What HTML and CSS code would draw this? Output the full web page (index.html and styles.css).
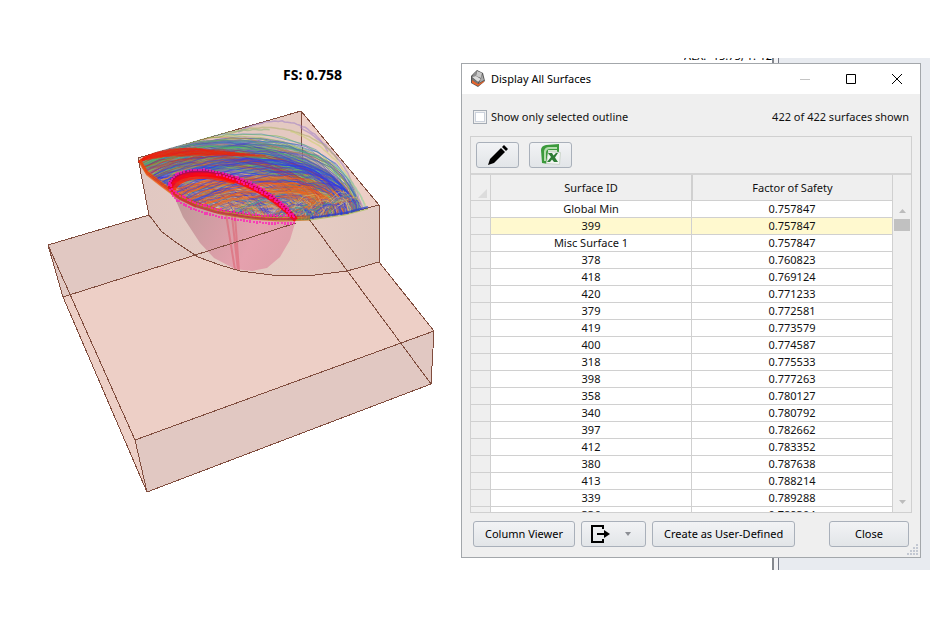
FILE: index.html
```
<!doctype html>
<html lang="en">
<head>
	<meta charset="utf-8">
	<title>Display All Surfaces</title>
	<link rel="stylesheet" href="styles.css">
</head>
<body>
<main class="workspace">
	<div class="view">
		<svg class="model" viewBox="0 58 440 512" role="img" aria-label="Slope model">
			<defs>
				<linearGradient id="bowlFill" x1="0" y1="0" x2="1" y2="0.3">
					<stop offset="0" stop-color="#bd9a98"/>
					<stop offset="0.4" stop-color="#d39da4"/>
					<stop offset="0.75" stop-color="#e5a1ae"/>
					<stop offset="1" stop-color="#df9fa9"/>
				</linearGradient>
				<linearGradient id="faceFill" x1="0" y1="0" x2="1" y2="0">
					<stop offset="0" stop-color="#e1c8c2"/>
					<stop offset="0.7" stop-color="#e6ccc3"/>
					<stop offset="1" stop-color="#e1c8c0"/>
				</linearGradient>
				<clipPath id="crest">
					<path d="M137 160L142 156L301 111L379 205L365 210L345 215L310 220L280 222L250 219L220 213L195 205L175 195L160 184L146 174Z"/>
				</clipPath>
			</defs>
			<text class="fs" x="283" y="80">FS: 0.758</text>
			<path fill="#edcfc6" d="M48 245L149 215L379 262L434 331L431 384L147 492L63 297Z"/>
			<path fill="#e1c8c2" d="M48 245L149 215L162 232L177 243L195 254L63 297Z"/>
			<path fill="#e1c8c2" d="M135 440L434 331L431 384L147 492Z"/>
			<path fill="#e4c9c1" d="M138 158L301 111L304 215L250 219Z"/>
			<path fill="#edcfc6" d="M301 111L379 205L304 222Z"/>
			<path fill="url(#faceFill)" d="M138 158L146 173L165 187L195 205L250 219L310 219L345 214L379 205V262L347 271L315 275H272L240 271L220 265L198 257L177 243L162 232L149 215Z"/>
			<path fill="url(#bowlFill)" d="M174 196L183 217L200 243L214 258L235 269L252 271L267 268L280 257L290 240L296 220L250 217Z"/>
			<g class="probe">
				<path d="M226 214L235 270M232 216L238 271M235 216L239 271"/>
			</g>
			<g class="edges">
				<path d="M48 245L149 215L138 158L301 111L379 205V262L434 331L431 384L147 492L63 297Z"/>
				<path d="M48 245L135 440L147 492M135 440L434 331"/>
				<path d="M63 297L296 223M309 219L431 384M301 111L304 215M345 214L379 205"/>
				<path d="M149 215L162 232L177 243L198 257L220 265L240 271L272 275H315L347 271L379 262"/>
			</g>
			<g id="surfaces" clip-path="url(#crest)">
				<path fill="#a8949c" opacity="0.6" d="M139 161C205 121 340 135 352 212L310 220L250 219L195 205L160 184Z"/>
			</g>
			<g id="rim"></g>
			<g id="critical"></g>
		</svg>
		<div class="coords"><span>ALX: -15.75, 1.-12</span></div>
	</div>
	<div class="dock"></div>

	<section class="dialog" role="dialog" aria-labelledby="dialogTitle">
		<header class="titlebar">
			<svg class="app-icon" viewBox="0 0 16 18">
				<path fill="#555" d="M7 0L13 3L15 11L8 17L1 13L1 6Z"/>
				<path fill="#c9c9c9" d="M7 1L12 3L11 8L6 6Z"/>
				<path fill="#8e8e8e" d="M7 1L6 6L2 7L4 3Z"/>
				<path fill="#ddd" d="M2 7L6 6L11 9L8 12Z"/>
				<path fill="#aaa" d="M12 4L14 10L9 13L11 9Z"/>
				<path fill="#777" d="M2 8L8 12V14L2 10Z"/>
				<path fill="#e8642c" d="M2 10L8 14L14 11V12L8 16L2 13Z"/>
			</svg>
			<h1 id="dialogTitle">Display All Surfaces</h1>
			<div class="window-buttons">
				<button type="button" aria-label="Minimize" disabled><svg viewBox="0 0 12 12"><path stroke="#c4c4c4" d="M1 6.5H11"/></svg></button>
				<button type="button" aria-label="Maximize"><svg viewBox="0 0 12 12"><path stroke="#000" d="M1.5 1.5H10.5V10.5H1.5Z"/></svg></button>
				<button type="button" aria-label="Close window"><svg viewBox="0 0 12 12"><path stroke="#000" d="M1 1L11 11M11 1L1 11"/></svg></button>
			</div>
		</header>
		<div class="options">
			<label><input type="checkbox"> Show only selected outline</label>
			<span>422 of 422 surfaces shown</span>
		</div>
		<div class="panel">
			<div class="toolbar">
				<button type="button" class="btn tool" aria-label="Edit">
					<svg viewBox="0 0 22 22" width="22" height="22">
						<path d="M1 21L3 15L14 4L18 8L7 19Z"/>
						<path d="M15 3L17 1L21 5L19 7Z"/>
					</svg>
				</button>
				<button type="button" class="btn tool" aria-label="Export to Excel">
					<svg viewBox="0 0 22 22" width="22" height="22">
						<path fill="#3c9a3c" d="M1 6Q1 2 6 1L19 0V9L8 20L2 19Z"/>
						<path fill="#b5dcae" d="M4 7Q5 3 9 3H17V5H10Q6 5 6 9V17H4Z"/>
						<path fill="#d3ebcd" d="M8 6H17V8H8Z"/>
						<path fill="#f3f6f3" stroke="#cdd6cd" d="M8.500 7.500L20.500 8.500L19.500 20.500L6.500 19.500Z"/>
						<path fill="#2f7d35" d="M8 9H12L13.500 11.500L16 9H18L15 13.500L18 18H14L12 15.500L10 18H7L11 13Z"/>
					</svg>
				</button>
			</div>
			<div class="grid">
				<table>
					<colgroup><col class="mark"><col><col></colgroup>
					<thead>
						<tr><th class="corner"><svg viewBox="0 0 9 9"><path fill="#dcdcdc" d="M9 0V9H0Z"/></svg></th><th>Surface ID</th><th>Factor of Safety</th></tr>
					</thead>
					<tbody>
						<tr><th></th><td>Global Min</td><td>0.757847</td></tr>
						<tr class="selected"><th></th><td>399</td><td>0.757847</td></tr>
						<tr><th></th><td>Misc Surface 1</td><td>0.757847</td></tr>
						<tr><th></th><td>378</td><td>0.760823</td></tr>
						<tr><th></th><td>418</td><td>0.769124</td></tr>
						<tr><th></th><td>420</td><td>0.771233</td></tr>
						<tr><th></th><td>379</td><td>0.772581</td></tr>
						<tr><th></th><td>419</td><td>0.773579</td></tr>
						<tr><th></th><td>400</td><td>0.774587</td></tr>
						<tr><th></th><td>318</td><td>0.775533</td></tr>
						<tr><th></th><td>398</td><td>0.777263</td></tr>
						<tr><th></th><td>358</td><td>0.780127</td></tr>
						<tr><th></th><td>340</td><td>0.780792</td></tr>
						<tr><th></th><td>397</td><td>0.782662</td></tr>
						<tr><th></th><td>412</td><td>0.783352</td></tr>
						<tr><th></th><td>380</td><td>0.787638</td></tr>
						<tr><th></th><td>413</td><td>0.788214</td></tr>
						<tr><th></th><td>339</td><td>0.789288</td></tr>
						<tr><th></th><td>336</td><td>0.789304</td></tr>
					</tbody>
				</table>
				<div class="scrollbar">
					<svg viewBox="0 0 7 4"><path d="M0 4L3.500 0L7 4Z"/></svg>
					<div class="thumb"></div>
					<svg viewBox="0 0 7 4"><path d="M0 0L3.500 4L7 0Z"/></svg>
				</div>
			</div>
		</div>
		<footer class="actions">
			<button type="button" class="btn">Column Viewer</button>
			<button type="button" class="btn export" aria-label="Export">
				<svg viewBox="0 0 20 20" width="20" height="20">
					<path fill="none" stroke="#000" stroke-width="2" d="M13 5V2H2V18H13V15"/>
					<path d="M7 9H14V6L20 10L14 14V11H7Z"/>
				</svg>
				<svg viewBox="0 0 6 4" width="6" height="4"><path fill="#8b8e94" d="M0 0H6L3 4Z"/></svg>
			</button>
			<button type="button" class="btn">Create as User-Defined</button>
			<button type="button" class="btn close">Close</button>
		</footer>
		<svg class="grip" viewBox="0 0 12 12"><path d="M9 0h2v2h-2zM6 3h2v2h-2zM9 3h2v2h-2zM3 6h2v2h-2zM6 6h2v2h-2zM9 6h2v2h-2zM0 9h2v2h-2zM3 9h2v2h-2zM6 9h2v2h-2zM9 9h2v2h-2z"/></svg>
	</section>
</main>
<script src="surfaces.js"></script>
</body>
</html>
```
FILE: styles.css
```
* {
    box-sizing: border-box;
}

body {
    margin: 0;
    background: #fff;
    color: #111;
}

body, button {
    font: 11px/16px "Noto Sans", "Open Sans", sans-serif;
}

.workspace {
    position: relative;
    display: flex;
    margin-top: 58px;
    height: 512px;
}

.view {
    flex: 1;
    display: flex;
    justify-content: space-between;
    overflow: hidden;
}

.model {
    flex: 0 0 440px;
    height: 512px;
}

.fs {
    font: bold 14px "Noto Sans", "Open Sans", sans-serif;
    fill: #000;
}

.edges {
    fill: none;
    stroke: #804d3e;
    shape-rendering: crispEdges;
}

.probe {
    fill: none;
    stroke: #dc5060;
    stroke-width: 2;
    opacity: .45;
}

polyline {
    fill: none;
}

.coords {
    display: flex;
    align-items: flex-end;
    height: 6px;
    overflow: hidden;
    color: #000;
}

.dock {
    flex: 0 0 158px;
    border-left: 2px solid #85888e;
    background: linear-gradient(to right, #f3f3f5 4px, #777b88 4px, #777b88 5px, #e8ebf0 5px);
}

.dialog {
    position: absolute;
    top: 5px;
    right: 9px;
    width: 460px;
    border: 1px solid #a3a7ab;
    background: #efefef;
}

.titlebar {
    display: flex;
    align-items: center;
    height: 30px;
    padding-left: 8px;
    background: #fff;
}

.app-icon {
    width: 16px;
    height: 18px;
    margin-right: 5px;
}

.titlebar h1 {
    flex: 1;
    margin: 0;
    font-size: 11px;
    font-weight: normal;
    color: #000;
}

.window-buttons {
    display: flex;
}

.window-buttons button {
    display: flex;
    align-items: center;
    justify-content: center;
    width: 46px;
    height: 30px;
    padding: 0;
    border: 0;
    background: none;
}

.window-buttons svg {
    width: 12px;
    height: 12px;
    fill: none;
}

.options {
    display: flex;
    align-items: center;
    justify-content: space-between;
    height: 42px;
    padding: 3px 11px 0;
}

.options label {
    display: flex;
    align-items: center;
    gap: 4px;
}

.options input {
    appearance: none;
    width: 14px;
    height: 14px;
    margin: 0;
    border: 1px solid #a5acb5;
    background: #fff;
    box-shadow: inset 0 0 0 1px #f0f0f0, inset 0 0 0 2px #ccd2dc;
}

.panel {
    margin: 0 8px;
    border: 1px solid #d0d0d0;
}

.toolbar {
    display: flex;
    gap: 10px;
    padding: 5px;
    border-bottom: 2px solid #d4d4d4;
}

.btn {
    display: flex;
    align-items: center;
    justify-content: center;
    height: 26px;
    padding: 0 10px;
    border: 1px solid #a9b0ba;
    border-radius: 3px;
    background: linear-gradient(#f2f3f5, #e2e5e8);
    color: #000;
    white-space: nowrap;
}

.tool {
    width: 43px;
    padding: 0;
}

.grid {
    display: flex;
    height: 337px;
    overflow: hidden;
}

table {
    flex: 1;
    width: 100%;
    height: 349px;
    table-layout: fixed;
    border-collapse: separate;
    border-spacing: 0;
}

.mark {
    width: 20px;
}

th, td {
    height: 17px;
    padding: 0;
    border-right: 1px solid #d0d0d0;
    border-bottom: 1px solid #d0d0d0;
    line-height: 16px;
    font-weight: normal;
    text-align: center;
}

thead th {
    height: 26px;
}

thead th + th + th {
    border-left: 1px solid #d0d0d0;
}

th.corner {
    padding: 0 3px 2px 0;
    text-align: right;
    vertical-align: bottom;
}

.corner svg {
    display: block;
    width: 9px;
    height: 9px;
    margin-left: auto;
}

td {
    background: #fff;
}

.selected td {
    background: #fff9cf;
}

.scrollbar {
    flex: none;
    display: flex;
    flex-direction: column;
    align-items: center;
    width: 18px;
    padding: 34px 0 8px;
}

.scrollbar svg {
    width: 7px;
    height: 4px;
    fill: #bcbcbc;
}

.thumb {
    width: 16px;
    height: 12px;
    margin: 6px 0 auto;
    background: #c1c1c1;
}

.actions {
    display: flex;
    gap: 6px;
    padding: 8px 11px 10px;
}

.actions .btn {
    padding: 0 11px;
}

.actions .export {
    justify-content: flex-start;
    gap: 15px;
    width: 65px;
    padding: 0 8px;
}

.close {
    width: 80px;
    margin-left: auto;
}

.grip {
    position: absolute;
    right: 1px;
    bottom: 1px;
    width: 12px;
    height: 12px;
    fill: #c3c8d2;
}
```
FILE: surfaces.js
```
var NS = 'http://www.w3.org/2000/svg';
var seed = 399;

// seeded so the surfaces look the same on every load
function rnd() {
  seed = (seed * 16807) % 2147483647;
  return seed / 2147483647;
}

function draw(group, points, color, width, opacity) {
  var line = document.createElementNS(NS, 'polyline');
  line.setAttribute('points', points.map(function (p) { return p[0].toFixed(1) + ',' + p[1].toFixed(1); }).join(' '));
  line.setAttribute('stroke', color);
  line.setAttribute('stroke-width', width);
  line.setAttribute('opacity', opacity);
  document.getElementById(group).appendChild(line);
}

function bezier(a, b, c, d, jitter) {
  var points = [];
  for (var i = 0; i <= 32; i++) {
    var t = i / 32, u = 1 - t;
    points.push([0, 1].map(function (k) {
      return u * u * u * a[k] + 3 * u * u * t * b[k] + 3 * u * t * t * c[k] + t * t * t * d[k] + (rnd() - 0.5) * jitter;
    }));
  }
  return points;
}

// crest line of the slope, left to right
var crest = [[139, 161], [146, 173], [160, 184], [175, 195], [195, 205], [220, 213], [250, 218], [280, 220], [310, 219], [345, 214], [368, 208]];

function onCrest(t) {
  var f = t * (crest.length - 1);
  var i = Math.min(Math.floor(f), crest.length - 2);
  f -= i;
  return [crest[i][0] + (crest[i + 1][0] - crest[i][0]) * f, crest[i][1] + (crest[i + 1][1] - crest[i][1]) * f];
}

function surface(t1, t2, rise, color, width, opacity) {
  var a = onCrest(t1), d = onCrest(t2);
  var w = d[0] - a[0];
  draw('surfaces', bezier(a, [a[0] + 0.3 * w, a[1] - 0.2 * w * rise], [d[0] - 0.06 * w, d[1] - 0.38 * w * rise], d, 1.8), color, width, opacity);
}

var outer = ['#3a3ae0', '#4a48b8', '#7a70a8', '#3f90b8', '#3aa890', '#68c048', '#98b850', '#c87848', '#8a7a80', '#4848d8', '#7060a0', '#50a870'];
var inner = ['#3838e0', '#5050c8', '#7868b0', '#3888c0', '#48a868', '#a8a858', '#e06828', '#e88030', '#c86040', '#e0a868', '#4040d0', '#c8b890'];

function pick(colors) {
  return colors[Math.floor(rnd() * colors.length)];
}

var i, t1, t2;
for (i = 0; i < 200; i++) {
  t1 = rnd() * 0.26;
  t2 = 0.76 + rnd() * 0.21;
  surface(t1, t2, 0.6 + rnd() * 0.62, pick(outer), 1, 0.55);
}
for (i = 0; i < 170; i++) {
  t1 = 0.15 + rnd() * 0.5;
  t2 = t1 + 0.2 + rnd() * 0.4;
  surface(t1, Math.min(t2, 0.95), 0.4 + rnd() * 0.8, pick(inner), 1, 0.6);
}
for (i = 0; i < 16; i++) {
  surface(rnd() * 0.15, 0.82 + rnd() * 0.12, 0.75 + rnd() * 0.15, pick(['#d84820', '#c02838', '#58d048']), 1, 0.5);
}
for (i = 0; i < 22; i++) {
  surface(0.25 + rnd() * 0.2, 0.82 + rnd() * 0.1, 0.6 + rnd() * 0.25, '#f06018', 1.2, 0.55);
}
for (i = 0; i < 14; i++) {
  surface(0.12 + rnd() * 0.3, 0.88 + rnd() * 0.07, 0.8 + rnd() * 0.2, '#2a38ee', 1.2, 0.5);
}
for (i = 0; i < 70; i++) {
  t1 = 0.66 + rnd() * 0.2;
  surface(t1, t1 + 0.06 + rnd() * 0.08, 1.2 + rnd() * 1.6, pick(inner), 1, 0.65);
}

// loose outer surfaces
draw('surfaces', bezier([238, 132], [275, 112], [312, 120], [328, 152], 1), '#9878c8', 1.5, 0.5);
draw('surfaces', bezier([300, 127], [340, 150], [352, 178], [363, 209], 1), '#9878c8', 1.5, 0.5);
draw('surfaces', bezier([225, 135], [268, 118], [320, 132], [338, 160], 1), '#a8b060', 1.5, 0.5);
draw('surfaces', bezier([290, 131], [335, 148], [350, 178], [367, 208], 1), '#c8d070', 1.5, 0.55);
draw('surfaces', bezier([335, 165], [352, 180], [362, 195], [365, 208], 1), '#88d0b8', 1.5, 0.55);
draw('surfaces', bezier([160, 153], [210, 134], [240, 128], [270, 130], 1), '#90b878', 1.5, 0.6);

// red band along the left end
for (i = 0; i < 14; i++) {
  draw('surfaces', bezier([139, 162], [150, 150 + i / 2], [180, 147 + i / 2], [200 + i * 5, 149 + i / 2], 1), '#f0200c', 1.5, 0.5);
}

for (i = 0; i < 5; i++) {
  draw('rim', crest.slice(0, 5).map(function (p) { return [p[0] + 1, p[1] - 2 + i]; }), i % 2 ? '#f02808' : '#e86010', 1.5, 0.7);
  draw('rim', crest.slice(3, 9).map(function (p) { return [p[0], p[1] - 3 + i]; }), ['#d03020', '#c09020', '#e05010', '#70a020', '#c07010'][i], 1, 0.8);
}
draw('rim', crest.slice(8).map(function (p) { return [p[0], p[1] - 1]; }), '#2038d0', 2, 0.7);
draw('rim', crest.slice(8).map(function (p) { return [p[0], p[1] + 1]; }), '#a0c050', 1, 0.7);

// critical surface outline with its markers
var upper = bezier([169, 186], [174, 160], [248, 166], [295, 217], 0);
var lower = [[169, 186], [172, 192], [180, 199], [195, 206], [215, 212], [240, 216], [265, 219], [296, 219]];
draw('critical', upper.slice(0, 20).map(function (p) { return [p[0] + 4, p[1] + 6]; }), '#ff2000', 4, 0.8);
draw('critical', upper.map(function (p) { return [p[0] + 1, p[1] + 3]; }), '#ff0010', 5, 0.9);
draw('critical', upper, '#b8004c', 3, 0.75);
draw('critical', lower, '#d01048', 2, 0.6);

function markers(points, spread, below) {
  for (var k = 0; k < points.length - 1; k++) {
    var a = points[k], b = points[k + 1];
    var n = Math.max(1, Math.round(Math.hypot(b[0] - a[0], b[1] - a[1]) / 3));
    for (var j = 0; j < n; j++) {
      var x = Math.round(a[0] + (b[0] - a[0]) * j / n);
      var y = Math.round(a[1] + (b[1] - a[1]) * j / n);
      var s = spread + Math.floor(rnd() * 2);
      draw('critical', [[x, y - s], [x, y - spread + 2]], '#ff18b8', 1.5, 0.95);
      if (k >= below) {
        draw('critical', [[x + 1, y + spread - 1], [x + 1, y + s + 1]], '#ff18b8', 1.5, 0.95);
      }
    }
  }
}
markers(upper.filter(function (p, n) { return n % 2 === 0; }), 2, 8);
markers(lower, 4, 0);
```
